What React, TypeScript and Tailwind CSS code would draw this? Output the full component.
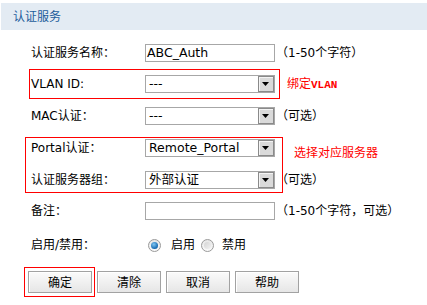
import React from "react";

const FONT = { fontFamily: '"DejaVu Sans", "Noto Sans CJK SC", sans-serif' };

function TextInput({ value }: { value?: string }) {
  return (
    <div className="shrink-0 w-[130px] h-[18px] border border-[#a7a7a7] bg-white flex items-center pl-[1px] text-[12.5px] leading-[16px] text-black whitespace-nowrap overflow-hidden">
      {value}
    </div>
  );
}

function Select({ value }: { value: string }) {
  return (
    <div className="shrink-0 w-[130px] h-[18px] border border-[#a7a7a7] bg-white flex items-center text-[12.5px] leading-[16px] text-black">
      <div className="flex-1 min-w-0 pl-[3px] whitespace-nowrap overflow-hidden">{value}</div>
      <div className="shrink-0 w-[16px] h-[16px] border border-[#8a8a8a] bg-[#dadada] shadow-[inset_1px_1px_0_#f4f4f4] flex items-center justify-center">
        <svg width="8" height="5" viewBox="0 0 8 5">
          <polygon points="0,0 7,0 3.5,4" fill="#000" />
        </svg>
      </div>
    </div>
  );
}

function Radio({ checked }: { checked?: boolean }) {
  return (
    <div className="shrink-0 w-[13px] h-[13px] rounded-full border border-[#9a9a9a] bg-gradient-to-b from-[#e6e6e6] to-[#fafafa] flex items-center justify-center">
      {checked ? (
        <div className="w-[7px] h-[7px] rounded-full bg-[radial-gradient(circle_at_40%_35%,#7fc6f2,#1468b0_70%,#0c4f8c)]" />
      ) : (
        <div className="w-[7px] h-[7px] rounded-full bg-gradient-to-br from-[#d4d4d4] to-[#f2f2f2]" />
      )}
    </div>
  );
}

function Btn({ label }: { label: string }) {
  return (
    <div className="shrink-0 w-[64px] h-[22px] border border-[#a2a2a2] bg-gradient-to-b from-[#fbfbfb] to-[#e6e6e6] shadow-[inset_1px_1px_0_#ffffff] flex justify-center pt-[4px] text-[12px] leading-[14px] text-black">
      {label}
    </div>
  );
}

export default function App() {
  return (
    <div
      className="w-[427px] h-[305px] bg-white overflow-hidden text-[12px] text-black"
      style={FONT}
    >
      <div className="pt-[3px]">
        <div className="ml-[1px] h-[27px] bg-[#e3ebf3] flex items-center pl-[12px] text-[12px] text-[#1d5d9b]">
          认证服务
        </div>
      </div>

      {/* Row 1 */}
      <div className="mt-[14px] ml-[31px] h-[18px] flex items-center whitespace-nowrap">
        <div className="shrink-0 w-[114px]">认证服务名称：</div>
        <TextInput value="ABC_Auth" />
        <div className="shrink-0 ml-[1px]">（1-50个字符）</div>
      </div>

      {/* VLAN */}
      <div className="mt-[7px] flex items-center whitespace-nowrap">
        <div className="shrink-0 ml-[29px] w-[251px] h-[30px] border border-[#ff0000] flex items-center pl-[1px]">
          <div className="shrink-0 w-[114px]">VLAN ID:</div>
          <Select value="---" />
        </div>
        <div className="shrink-0 ml-[7px] text-[#ff0000] text-[12px]">
          绑定<span className="text-[11px] font-bold" style={{ fontFamily: '"Liberation Mono", monospace' }}>VLAN</span>
        </div>
      </div>

      {/* MAC */}
      <div className="mt-[8px] ml-[31px] h-[18px] flex items-center whitespace-nowrap">
        <div className="shrink-0 w-[114px]">MAC认证：</div>
        <Select value="---" />
        <div className="shrink-0 ml-[1px]">（可选）</div>
      </div>

      {/* Portal box */}
      <div className="mt-[12px] flex items-start whitespace-nowrap">
        <div className="shrink-0 ml-[25px] w-[258px] h-[56px] border border-[#ff0000] flex flex-col pl-[5px] pt-[1px] gap-[14px]">
          <div className="h-[18px] flex items-center">
            <div className="shrink-0 w-[114px]">Portal认证：</div>
            <Select value="Remote_Portal" />
          </div>
          <div className="h-[18px] flex items-center">
            <div className="shrink-0 w-[114px]">认证服务器组：</div>
            <Select value="外部认证" />
            <div className="shrink-0 ml-[1px]">（可选）</div>
          </div>
        </div>
        <div className="shrink-0 ml-[11px] mt-[8px] leading-[16px] text-[#ff0000]">选择对应服务器</div>
      </div>

      {/* Remark */}
      <div className="mt-[9px] ml-[31px] h-[18px] flex items-center whitespace-nowrap">
        <div className="shrink-0 w-[114px]">备注：</div>
        <TextInput />
        <div className="shrink-0 ml-[1px]">（1-50个字符，可选）</div>
      </div>

      {/* Enable */}
      <div className="mt-[16px] ml-[31px] h-[18px] flex items-center whitespace-nowrap">
        <div className="shrink-0 w-[117px]">启用/禁用：</div>
        <Radio checked />
        <div className="ml-[10px]">启用</div>
        <div className="ml-[6px]">
          <Radio />
        </div>
        <div className="ml-[8px]">禁用</div>
      </div>

      {/* Buttons */}
      <div className="mt-[13px] ml-[24px] flex items-center">
        <div className="shrink-0 w-[71px] h-[30px] border border-[#ff0000] flex items-center pl-[3px]">
          <Btn label="确定" />
        </div>
        <div className="ml-[2px] flex gap-[5px]">
          <Btn label="清除" />
          <Btn label="取消" />
          <Btn label="帮助" />
        </div>
      </div>
    </div>
  );
}
